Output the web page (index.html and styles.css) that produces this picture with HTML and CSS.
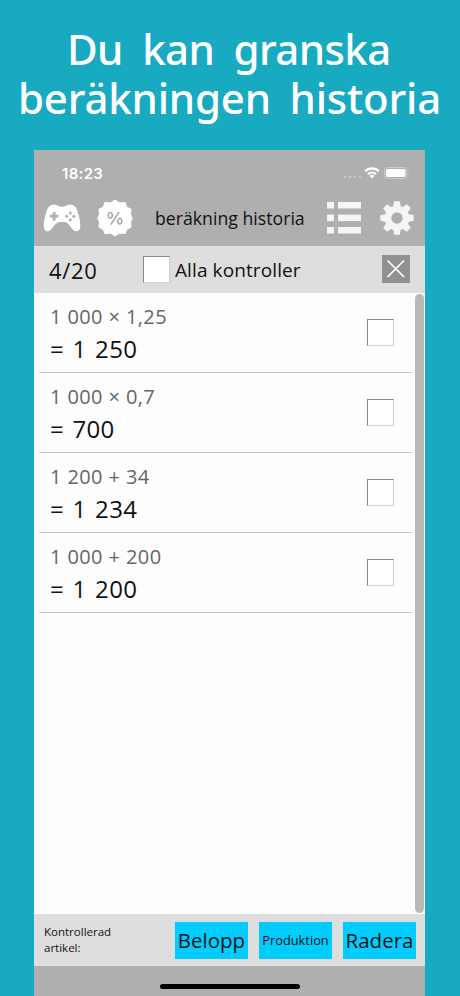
FILE: index.html
```html
<!DOCTYPE html>
<html lang="sv">
<head>
    <meta charset="UTF-8">
    <meta name="viewport" content="width=device-width, initial-scale=1.0">
    <title>beräkning historia</title>
    <link rel="stylesheet" href="styles.css">
</head>
<body>

<h1 class="headline">
    <span class="line-one">Du kan granska</span>
    <span class="line-two">beräkningen historia</span>
</h1>

<div class="phone">
    <div class="status-bar">
        <span class="time">18:23</span>
        <svg class="status-icons" width="70" height="16" viewBox="0 0 70 16">
            <g fill="#c8c8c8">
                <circle cx="3" cy="12" r="1.3"/>
                <circle cx="8" cy="12" r="1.3"/>
                <circle cx="13" cy="12" r="1.3"/>
                <circle cx="18" cy="12" r="1.3"/>
            </g>
            <g fill="none" stroke="#fff" stroke-width="2.2">
                <path d="M23.200 6.200a9.600 9.600 0 0 1 13.600 0"/>
                <path d="M26 9.200a5.600 5.600 0 0 1 8 0"/>
            </g>
            <path d="M27.500 11a3.700 3.700 0 0 1 5 0L30 13.600z" fill="#fff"/>
            <rect x="42.500" y="2.500" width="22.500" height="11" rx="3" fill="none" stroke="#cdcdcd"/>
            <rect x="44" y="4" width="19.500" height="8" rx="1.500" fill="#fff"/>
            <path d="M66.300 6.200q1.600 1.800 0 3.600z" fill="#d0d0d0"/>
        </svg>
    </div>

    <div class="nav-bar">
        <svg class="icon-game" width="38" height="28" viewBox="0 0 38 28">
            <path d="M10 .800C13 .500 14.500 1.200 16 2.300C17.500 3 20.500 3 22 2.300C23.500 1.200 25 .500 28 .800C32 1.200 33.500 4 35 9C36.500 14 37.300 18 37.300 22C37.300 27.500 33 28.500 30.500 26C27.500 23.500 25.500 18.300 21.500 18H16.500C12.500 18.300 10.500 23.500 7.500 26C5 28.500 .700 27.500 .700 22C.700 18 1.500 14 3 9C4.500 4 6 1.200 10 .800Z" fill="#fff"/>
            <g fill="#afafaf">
                <path d="M9.700 8h2.800v2.800h2.800v2.800h-2.800v2.800h-2.800v-2.800H6.900v-2.800h2.800z"/>
                <circle cx="27.300" cy="8.900" r="1.500"/>
                <circle cx="27.300" cy="15.700" r="1.500"/>
                <circle cx="23.700" cy="12.300" r="1.500"/>
                <circle cx="30.900" cy="12.300" r="1.500"/>
            </g>
        </svg>
        <svg class="icon-percent" width="36" height="38" viewBox="-18 -19 36 38">
            <path d="M0-17.800L4.500-15L10-15.500L11.500-11L16-8.500L15.300-4L17 0L15.300 4.500L16 9L11.500 11.500L10 15.500L4.500 15L0 17.800L-4.500 15L-10 15.500L-11.500 11.500L-16 9L-15.300 4.500L-17 0L-15.300-4L-16-8.500L-11.500-11L-10-15.500L-4.500-15Z" fill="#fff" stroke="#fff" stroke-width="1.200" stroke-linejoin="round"/>
            <g fill="none" stroke="#a8a8a8" stroke-width="1.500">
                <ellipse cx="-4.700" cy="-2.700" rx="2.100" ry="2.700"/>
                <ellipse cx="4.700" cy="3.300" rx="2.100" ry="2.700"/>
                <path d="M4.200-6L-4.200 6.500"/>
            </g>
        </svg>
        <span class="nav-title">beräkning historia</span>
        <svg class="icon-list" width="34" height="32" viewBox="0 0 34 32" fill="#f5f5f5">
            <rect width="7" height="6.500"/>
            <rect x="11" width="23" height="6.500"/>
            <rect y="12.600" width="7" height="6.500"/>
            <rect x="11" y="12.600" width="23" height="6.500"/>
            <rect y="25" width="7" height="6.500"/>
            <rect x="11" y="25" width="23" height="6.500"/>
        </svg>
        <svg class="icon-gear" width="34" height="34" viewBox="-17 -17 34 34" fill="#f5f5f5">
            <path id="tooth" d="M-3.900-11L-2.800-16.700H2.800L3.900-11V11L2.800 16.700H-2.800L-3.900 11Z"/>
            <use href="#tooth" transform="rotate(45)"/>
            <use href="#tooth" transform="rotate(90)"/>
            <use href="#tooth" transform="rotate(135)"/>
            <circle r="12.300"/>
            <circle r="5.700" fill="#afafaf"/>
        </svg>
    </div>

    <div class="select-bar">
        <span class="count">4/20</span>
        <span class="checkbox"></span>
        <span class="select-all">Alla kontroller</span>
        <svg class="close" width="28" height="28" viewBox="0 0 28 28">
            <rect width="28" height="28" fill="#919191"/>
            <path d="M5.500 5.500L22 22M22 5.500L5.500 22" stroke="#fff" stroke-width="1.700"/>
        </svg>
    </div>

    <div class="history">
        <div class="list">
            <div class="row">
                <div>
                    <div class="expression">1 000 × 1,25</div>
                    <div class="result">= 1 250</div>
                </div>
                <span class="checkbox"></span>
            </div>
            <div class="row">
                <div>
                    <div class="expression">1 000 × 0,7</div>
                    <div class="result">= 700</div>
                </div>
                <span class="checkbox"></span>
            </div>
            <div class="row">
                <div>
                    <div class="expression">1 200 + 34</div>
                    <div class="result">= 1 234</div>
                </div>
                <span class="checkbox"></span>
            </div>
            <div class="row">
                <div>
                    <div class="expression">1 000 + 200</div>
                    <div class="result">= 1 200</div>
                </div>
                <span class="checkbox"></span>
            </div>
        </div>
        <div class="scrollbar"></div>
    </div>

    <div class="actions">
        <div class="actions-label">Kontrollerad<br>artikel:</div>
        <div class="button">Belopp</div>
        <div class="button small">Produktion</div>
        <div class="button">Radera</div>
    </div>

    <div class="home-area">
        <div class="home-indicator"></div>
    </div>
</div>

</body>
</html>
```
FILE: styles.css
```css
* {
    box-sizing: border-box;
}

body {
    margin: 0;
    height: 996px;
    overflow: hidden;
    background-color: #17aac1;
    font-family: "Open Sans", "Noto Sans", sans-serif;
    color: #111;
}

.headline {
    margin: 0;
    height: 150px;
    padding-top: 24px;
    font-family: "Noto Sans", sans-serif;
    font-size: 42px;
    font-weight: 500;
    line-height: 49px;
    color: #fff;
    white-space: nowrap;
}

.headline span {
    display: block;
}

.line-one {
    padding-left: 67px;
    letter-spacing: -0.6px;
    word-spacing: 9px;
}

.line-two {
    padding-left: 18px;
    letter-spacing: -0.2px;
    word-spacing: 8px;
}

.phone {
    width: 391px;
    height: 846px;
    margin-left: 34px;
    background-color: #fdfdfd;
    display: flex;
    flex-direction: column;
}

.status-bar {
    height: 46px;
    padding: 0 13px 0 28px;
    background-color: #afafaf;
    display: flex;
    justify-content: space-between;
    align-items: center;
}

.time {
    font-family: Inter, sans-serif;
    font-size: 15px;
    font-weight: 600;
    color: #fff;
    letter-spacing: 0.3px;
}

.nav-bar {
    height: 50px;
    padding: 0 11px 6px 9px;
    background-color: #afafaf;
    display: flex;
    align-items: center;
}

.icon-percent {
    margin-left: 16px;
}

.nav-title {
    width: 150px;
    margin-left: 22px;
    font-size: 17.7px;
    white-space: nowrap;
}

.icon-list {
    margin-left: 22px;
}

.icon-gear {
    margin-left: auto;
}

.select-bar {
    height: 47px;
    padding: 0 15px;
    background-color: #dedede;
    display: flex;
    align-items: center;
}

.count {
    width: 94px;
    font-size: 22px;
    letter-spacing: 0.7px;
}

.checkbox {
    width: 27px;
    height: 27px;
    background-color: #fff;
    border: 1px solid #d0d0d0;
    border-top-color: #888;
    border-left-color: #888;
}

.select-all {
    margin-left: 5px;
    font-size: 19px;
    letter-spacing: 0.1px;
    white-space: nowrap;
}

.close {
    margin: -2px 0 0 auto;
}

.history {
    height: 621px;
    display: flex;
    justify-content: space-between;
    padding: 0 1px 0 5px;
}

.list {
    width: 373px;
}

.row {
    height: 80px;
    padding: 8px 18px 0 11px;
    border-bottom: 1px solid #c4c4c4;
    display: flex;
    justify-content: space-between;
    white-space: nowrap;
}

.row .checkbox {
    margin-top: 18px;
}

.expression {
    font-size: 20px;
    line-height: 32px;
    letter-spacing: 0.4px;
    color: #666;
}

.result {
    font-size: 24px;
    line-height: 32px;
    letter-spacing: 0.3px;
    word-spacing: 2px;
}

.scrollbar {
    width: 9px;
    height: 619px;
    margin-top: 1px;
    border-radius: 5px;
    background-color: #b9b9b9;
}

.actions {
    height: 52px;
    padding: 0 9px 0 10px;
    background-color: #dedede;
    display: flex;
    align-items: center;
    gap: 11px;
}

.actions-label {
    width: 120px;
    font-size: 11.5px;
    line-height: 16px;
}

.button {
    width: 73px;
    height: 37px;
    background-color: #00ccff;
    font-size: 20.5px;
    line-height: 37px;
    text-align: center;
}

.button.small {
    font-size: 12.8px;
}

.home-area {
    height: 30px;
    background-color: #afafaf;
    display: flex;
    justify-content: center;
    padding-top: 18px;
}

.home-indicator {
    width: 140px;
    height: 5px;
    border-radius: 3px;
    background-color: #000;
}
```
